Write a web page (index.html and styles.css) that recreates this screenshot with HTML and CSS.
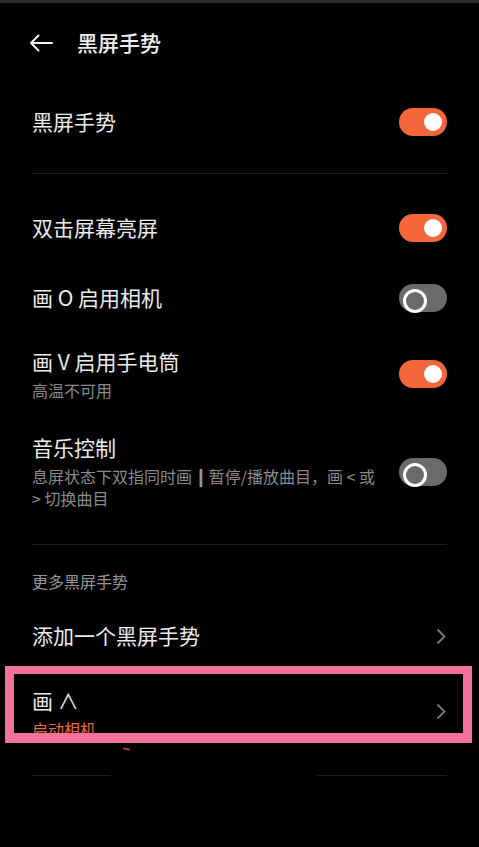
FILE: index.html
```html
<!DOCTYPE html>
<html lang="zh-CN">
<head>
<meta charset="utf-8">
<title>黑屏手势</title>
<link rel="stylesheet" href="styles.css">
</head>
<body>
<div class="screen">
  <div class="topbar"></div>
  <header class="header">
    <svg class="back" width="24" height="18" viewBox="0 0 24 18" aria-hidden="true">
      <path d="M2 9 H23 M9.5 1.5 L2 9 L9.5 16.5" fill="none" stroke="#f2f2f2" stroke-width="2" stroke-linecap="round" stroke-linejoin="round"/>
    </svg>
    <h1 class="title">黑屏手势</h1>
  </header>

  <div class="row row-main">
    <div class="text"><div class="label">黑屏手势</div></div>
    <span class="toggle on"></span>
  </div>
  <div class="divider first"></div>

  <div class="row row-simple">
    <div class="text"><div class="label">双击屏幕亮屏</div></div>
    <span class="toggle on"></span>
  </div>
  <div class="row row-simple">
    <div class="text"><div class="label">画 O 启用相机</div></div>
    <span class="toggle off"></span>
  </div>
  <div class="row row-sub">
    <div class="text">
      <div class="label">画 V 启用手电筒</div>
      <div class="sub">高温不可用</div>
    </div>
    <span class="toggle on"></span>
  </div>
  <div class="row row-music">
    <div class="text wide">
      <div class="label">音乐控制</div>
      <div class="sub">息屏状态下双指同时画<span class="bar">|</span>暂停/播放曲目，画 &lt; 或<br>&gt; 切换曲目</div>
    </div>
    <span class="toggle off"></span>
  </div>
  <div class="divider second"></div>

  <div class="section">更多黑屏手势</div>

  <div class="row row-link">
    <div class="text"><div class="label">添加一个黑屏手势</div></div>
    <svg class="chev" width="10" height="17" viewBox="0 0 10 17" aria-hidden="true"><path d="M1.5 1.5 L8.5 8.5 L1.5 15.5" fill="none" stroke="#7a7a7a" stroke-width="1.8"/></svg>
  </div>
  <div class="row row-gesture">
    <div class="text">
      <div class="label">画 ∧</div>
      <div class="sub orange">启动相机</div>
    </div>
    <svg class="chev" width="10" height="17" viewBox="0 0 10 17" aria-hidden="true"><path d="M1.5 1.5 L8.5 8.5 L1.5 15.5" fill="none" stroke="#7a7a7a" stroke-width="1.8"/></svg>
  </div>
  <div class="divider split"><span class="seg seg-a"></span><span class="seg seg-b"></span></div>

  <div class="highlight"></div>
  <div class="mark"></div>
</div>
</body>
</html>
```
FILE: styles.css
```css
* { box-sizing: border-box; }
html, body {
  margin: 0;
  padding: 0;
  background: #000;
}
body {
  font-family: "Noto Sans CJK SC", "Noto Sans", sans-serif;
  color: #ebebeb;
}
.screen {
  position: relative;
  width: 479px;
  height: 847px;
  background: #000;
  overflow: hidden;
}
.topbar {
  height: 3px;
  background: #2a2a2a;
}
.header {
  height: 80px;
  display: flex;
  align-items: center;
  padding-left: 29px;
  padding-bottom: 3px;
}
.back { display: block; margin-top: 2px; }
.title {
  margin: 0 0 0 24px;
  font-size: 21px;
  font-weight: 500;
  line-height: 28px;
  color: #f0f0f0;
}
.row {
  display: flex;
  align-items: center;
  padding: 0 32px 0 32px;
}
.text { flex: 1; min-width: 0; }
.text.wide { padding-right: 8px; }
.label {
  font-size: 21px;
  line-height: 28px;
  color: #ebebeb;
}
.row-main .label,
.row-simple .label,
.row-link .label { margin-bottom: 3px; }
.sub {
  font-size: 16px;
  line-height: 22px;
  color: #8a8a8a;
}
.sub.orange { color: #e8683f; }
.bar {
  margin: 0 6px;
  font-weight: 700;
  color: #9a9a9a;
  text-shadow: 1px 0 0 #9a9a9a;
}
.row-main { height: 78px; }
.row-simple { height: 70px; }
.row-sub { height: 82px; align-items: flex-start; padding-top: 14px; }
.row-sub .sub { margin-top: 4px; }
.row-sub .toggle { margin-top: 13px; }
.row-music { height: 129px; align-items: flex-start; padding-top: 18px; }
.row-music .sub { margin-top: 4px; }
.row-music .toggle { margin-top: 25px; }
.row-link { height: 72px; }
.row-gesture { height: 103px; align-items: flex-start; padding-top: 14px; }
.row-gesture .sub { margin-top: 4px; }
.row-gesture .chev { margin-top: 17px; }

.divider { margin: 0 32px 0 31px; height: 1px; background: #1e1e1e; }
.divider.first { margin-top: 12px; margin-bottom: 19px; }
.divider.second { margin-top: 0; }
.divider.split { background: transparent; display: flex; justify-content: space-between; }
.seg { display: block; height: 1px; background: #1e1e1e; }
.seg-a { width: 80px; }
.seg-b { width: 130px; }

.section {
  padding: 25px 32px 8px;
  font-size: 16px;
  line-height: 22px;
  color: #979797;
}

.toggle {
  position: relative;
  flex: none;
  width: 48px;
  height: 28px;
  border-radius: 14px;
}
.toggle.on { background: #f4673a; }
.toggle.off { background: #6a6a6a; }
.toggle::after {
  content: "";
  position: absolute;
  top: 5px;
  width: 18px;
  height: 18px;
  border-radius: 50%;
}
.toggle.on::after { right: 5px; background: #ffffff; }
.toggle.off::after {
  left: 4px;
  background: #6a6a6a;
  border: 3.5px solid #ffffff;
}

.chev { display: block; flex: none; margin-right: 1px; }

.highlight {
  position: absolute;
  left: 5px;
  top: 666px;
  width: 467px;
  height: 77px;
  border: 9px solid #f2729a;
  border-top-width: 8px;
  border-bottom-width: 10px;
}
.mark {
  position: absolute;
  left: 123px;
  top: 748px;
  width: 7px;
  height: 2px;
  background: #a8333c;
  transform: rotate(8deg);
}
```
